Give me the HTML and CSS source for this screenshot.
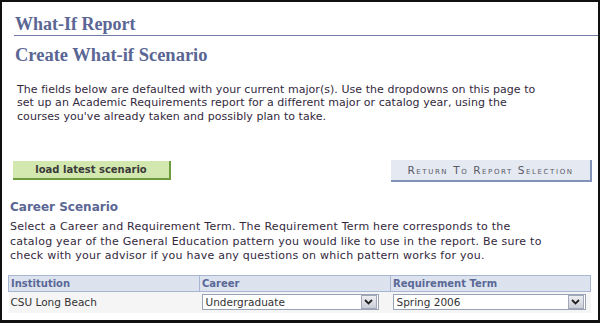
FILE: index.html
```html
<!DOCTYPE html>
<html>
<head>
<meta charset="utf-8">
<link rel="stylesheet" href="styles.css">
</head>
<body>
<div class="frame">
  <h1 class="page-title">What-If Report</h1>
  <h2 class="sub-title">Create What-if Scenario</h2>
  <p class="intro">The fields below are defaulted with your current major(s). Use the dropdowns on this page to<br>set up an Academic Requirements report for a different major or catalog year, using the<br><span class="last-line">courses you've already taken and possibly plan to take.</span></p>
  <div class="actions">
    <button class="btn-green" type="button">load latest scenario</button>
    <button class="btn-blue" type="button">Return To Report Selection</button>
  </div>
  <h3 class="section-title">Career Scenario</h3>
  <p class="section-text">Select a Career and Requirement Term. The Requirement Term here corresponds to the<br>catalog year of the General Education pattern you would like to use in the report. Be sure to<br>check with your advisor if you have any questions on which pattern works for you.</p>
  <table class="grid">
    <thead>
      <tr>
        <th class="col-inst">Institution</th>
        <th class="col-career">Career</th>
        <th class="col-term">Requirement Term</th>
      </tr>
    </thead>
    <tbody>
      <tr>
        <td>CSU Long Beach</td>
        <td>
          <div class="select select-career">
            <span class="select-value">Undergraduate</span>
            <span class="select-arrow"><svg width="9" height="6" viewBox="0 0 9 6"><path d="M1 1 L4.5 4.5 L8 1" fill="none" stroke="#222" stroke-width="1.8"/></svg></span>
          </div>
        </td>
        <td>
          <div class="select select-term">
            <span class="select-value">Spring 2006</span>
            <span class="select-arrow"><svg width="9" height="6" viewBox="0 0 9 6"><path d="M1 1 L4.5 4.5 L8 1" fill="none" stroke="#222" stroke-width="1.8"/></svg></span>
          </div>
        </td>
      </tr>
    </tbody>
  </table>
</div>
</body>
</html>
```

FILE: styles.css
```css
html, body {
  margin: 0;
  padding: 0;
  background: #ffffff;
}

.frame {
  box-sizing: border-box;
  width: 600px;
  height: 323px;
  border: 2px solid #111111;
  border-bottom-width: 3px;
  overflow: hidden;
  font-family: "DejaVu Sans", Verdana, sans-serif;
  color: #333333;
}

.page-title {
  margin: 12px 0 0 12px;
  padding: 0 0 1px 1px;
  font-family: "Liberation Serif", "Times New Roman", serif;
  font-size: 18px;
  line-height: 20px;
  font-weight: bold;
  color: #5a6694;
  border-bottom: 1px solid #6f7ca5;
}

.sub-title {
  margin: 9px 0 0 13px;
  font-family: "Liberation Serif", "Times New Roman", serif;
  font-size: 18.5px;
  line-height: 21px;
  font-weight: bold;
  color: #5a6694;
}

.intro {
  margin: 17px 0 0 15px;
  font-size: 11px;
  letter-spacing: 0.05px;
  line-height: 13px;
  color: #33293d;
  white-space: nowrap;
}

.last-line {
  display: inline-block;
  margin-top: 1px;
}

.actions {
  display: flex;
  justify-content: space-between;
  align-items: flex-start;
  margin: 37px 6px 0 11px;
}

.btn-green {
  box-sizing: border-box;
  width: 158px;
  height: 19px;
  margin-top: 1px;
  padding: 0;
  border: 0;
  border-right: 2px solid #6d9c3f;
  border-bottom: 2px solid #6d9c3f;
  background: #d3e8af;
  font-family: "DejaVu Sans", Verdana, sans-serif;
  font-size: 10px;
  font-weight: bold;
  color: #3a3a3a;
}

.btn-blue {
  box-sizing: border-box;
  width: 201px;
  height: 22px;
  padding: 0;
  border: 0;
  border-right: 2px solid #8392b8;
  border-bottom: 2px solid #8392b8;
  background: #e5e9f2;
  font-family: "DejaVu Sans", Verdana, sans-serif;
  font-size: 10.5px;
  font-variant: small-caps;
  letter-spacing: 1.6px;
  color: #5a5a66;
}

.section-title {
  margin: 17px 0 0 8px;
  font-size: 12px;
  line-height: 16px;
  font-weight: bold;
  color: #5a6694;
}

.section-text {
  margin: 5px 0 0 8px;
  font-size: 11px;
  letter-spacing: 0.25px;
  line-height: 14.5px;
  color: #33293d;
  white-space: nowrap;
}

.grid {
  margin: 11px 0 0 6px;
  width: 583px;
  border-collapse: collapse;
  font-size: 10px;
}

.grid th {
  height: 15px;
  padding: 0 0 0 2px;
  text-align: left;
  font-weight: bold;
  color: #5a6896;
  background: #dce3ef;
  border: 1px solid #a7b6d1;
}

.grid td {
  height: 21px;
  padding: 0 0 0 2px;
  background: #f5f5f5;
  color: #333333;
  font-size: 10.5px;
  vertical-align: middle;
}

.col-inst { width: 188px; }
.col-career { width: 188px; }

.select {
  box-sizing: border-box;
  display: flex;
  align-items: center;
  justify-content: space-between;
  height: 16px;
  background: #ffffff;
  border: 1px solid #9aa3b5;
}

.select-career { width: 177px; }
.select-term { width: 193px; }

.select-value {
  padding-left: 3px;
  font-size: 10.5px;
  color: #333333;
}

.select-arrow {
  box-sizing: border-box;
  display: flex;
  align-items: center;
  justify-content: center;
  width: 16px;
  height: 14px;
  margin-right: 1px;
  background: linear-gradient(#eeeef2, #c9cdd8);
  border: 1px solid #a2a8b8;
}
```
